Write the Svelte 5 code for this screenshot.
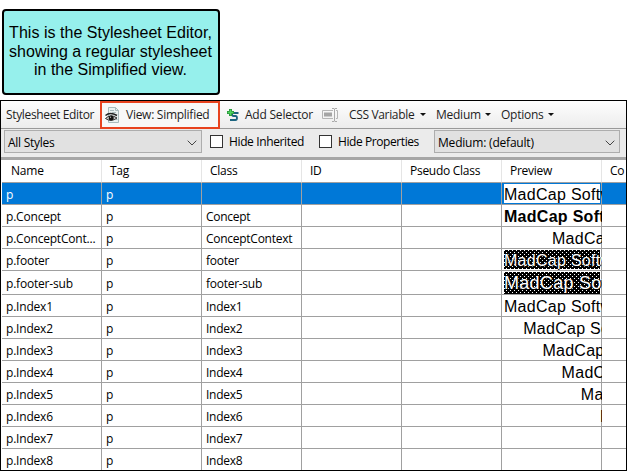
<script>
  const columns = ['Name', 'Tag', 'Class', 'ID', 'Pseudo Class', 'Preview', 'Co'];
  const rows = [
    { name: 'p', cls: '', preview: 'plain', indent: 0, selected: true },
    { name: 'p.Concept', cls: 'Concept', preview: 'bold', indent: 0 },
    { name: 'p.ConceptCont...', cls: 'ConceptContext', preview: 'plain', indent: 48 },
    { name: 'p.footer', cls: 'footer', preview: 'dark', indent: 0 },
    { name: 'p.footer-sub', cls: 'footer-sub', preview: 'dark large', indent: 0, tall: true },
    ...[1, 2, 3, 4, 5, 6, 7, 8].map((n) => ({
      name: `p.Index${n}`, cls: `Index${n}`, preview: 'plain', indent: (n - 1) * 19.2
    }))
  ];
</script>

<main>
  <div class="callout">
    <span class="c1">This is the Stylesheet Editor,</span>
    <span>showing a regular stylesheet</span>
    <span>in the Simplified view.</span>
  </div>

  <section class="editor">
    <div class="toolbar">
      <span class="title">Stylesheet Editor</span>
      <div class="view">
        <svg width="16" height="16" viewBox="0 0 16 16">
          <path d="M3.5.5h7l3 3v12h-10z" fill="#eaf1f2" stroke="#a9bbbd" />
          <path d="M10.500.5v3h3M5 3.500h4M7 5.500h4M10.500 12.500h2" fill="none" stroke="#a9bbbd" />
          <path d="M.5 8.500Q5 4.500 12 8.500" fill="none" stroke="#222" stroke-width="1.500" />
          <path d="M.5 11.500Q5.500 6.500 12 11Q6 15.500.5 11.500Z" fill="#ccc" stroke="#333" />
          <circle cx="6.200" cy="11" r="2.500" fill="#111" />
          <circle cx="5.500" cy="10.200" r=".6" fill="#ccc" />
        </svg>
        <span>View: Simplified</span>
      </div>
      <svg class="add-icon" width="12" height="12" viewBox="0 0 12 12">
        <path d="M11.500 4H6.500Q5 4 5 5.500T6.500 7H8.500Q10 7 10 9T8.500 11H3" fill="none" stroke="#1c6580" stroke-width="1.800" />
        <path d="M3.500 0v7M0 3.500h7" stroke="#27943a" stroke-width="3" />
        <path d="M3.500.7v5.600M.7 3.500h5.600" stroke="#4fd45f" stroke-width="1.400" />
      </svg>
      <span class="add">Add Selector</span>
      <svg width="17" height="14" viewBox="0 0 17 14">
        <path d="M11 2.500H.5v8H11M14 2.500h1.500v8H14" fill="none" stroke="#b5b5b5" />
        <path d="M2 4.500h8v4H2z" fill="#a5a5a5" />
        <path d="M10 .5h2l.5.5.5-.5h2M10 13.500h2l.5-.5.5.5h2M12.500 1v12" fill="none" stroke="#aaa" />
      </svg>
      <span class="css">CSS Variable</span><i></i>
      <span class="medium">Medium</span><i></i>
      <span class="options">Options</span><i></i>
    </div>

    <div class="filters">
      <div class="select styles"><span>All Styles</span>
        <svg width="10" height="6" viewBox="0 0 10 6"><path d="M.7.7 5 5 9.300.7" fill="none" stroke="#444" /></svg>
      </div>
      <b class="box"></b><span class="inh">Hide Inherited</span>
      <b class="box"></b><span class="prop">Hide Properties</span>
      <div class="select media"><span>Medium: (default)</span>
        <svg width="10" height="6" viewBox="0 0 10 6"><path d="M.7.7 5 5 9.300.7" fill="none" stroke="#444" /></svg>
      </div>
    </div>

    <div class="grid">
      <div class="row head">
        {#each columns as column}<div class="cell">{column}</div>{/each}
      </div>
      {#each rows as row}
        <div class="row" class:selected={row.selected} class:tall={row.tall}>
          <div class="cell">{row.name}</div>
          <div class="cell">p</div>
          <div class="cell">{row.cls}</div>
          <div class="cell"></div>
          <div class="cell"></div>
          <div class="cell sample">
            <div class="preview {row.preview}" style="padding-left: {row.indent}px">MadCap Software</div>
          </div>
          <div class="cell"></div>
        </div>
      {/each}
    </div>
  </section>
</main>

<style>
  :global(body) { background: #fff; }
  * { box-sizing: border-box; }
  main { width: 627px; height: 471px; overflow: hidden; padding-top: 9px; font: 12px/16px "Open Sans", "Noto Sans", sans-serif; color: #000; white-space: nowrap; letter-spacing: -0.27px; }
  svg { flex: none; display: block; }
  .callout { width: 218px; height: 86px; margin: 0 0 5px 1.500px; border: 2px solid #000; border-radius: 4px; background: #96f0ec; display: flex; flex-direction: column; align-items: center; padding-top: 13px; font: 16px/18.500px "Liberation Sans", Arial, sans-serif; letter-spacing: 0; }
  .c1 { letter-spacing: .03px; }
  .editor { height: 371px; width: 627px; border: 1px solid #000; display: flex; flex-direction: column; overflow: hidden; }
  .toolbar { flex: none; height: 28px; display: flex; align-items: center; padding-left: 5px; border-bottom: 1px solid #999; background: linear-gradient(#fefefe, #ececec); color: #1e1e1e; }
  .title { width: 94px; letter-spacing: -0.35px; }
  .view { width: 120px; height: 28px; border: 2px solid #e8431f; display: flex; align-items: center; padding-left: 3px; gap: 5px; background: #f8f8f8; }
  .add-icon { margin-left: 7px; }
  .add { width: 77px; margin-left: 6px; letter-spacing: -0.22px; }
  .css { width: 66px; margin-left: 10px; letter-spacing: -0.34px; }
  .medium { width: 44px; margin-left: 10px; letter-spacing: -0.25px; }
  .options { width: 42px; margin-left: 10px; letter-spacing: -0.25px; }
  i { margin-left: 5px; border: 3px solid transparent; border-top: 3px solid #111; border-bottom: 0; }
  .filters { flex: none; height: 31px; display: flex; align-items: center; padding: 0 0 3px 3px; border-bottom: 3px solid #a6a6a6; background: #ebebeb; }
  .select { height: 23px; border: 1px solid #adadad; background: #e1e1e1; display: flex; align-items: center; justify-content: space-between; padding: 2px 4px 0 3px; }
  .styles { width: 198px; }
  .media { width: 186px; letter-spacing: -0.2px; }
  .box { width: 13px; height: 13px; margin-left: 8px; border: 1px solid #333; background: #fff; }
  .inh { width: 82px; margin-left: 6px; letter-spacing: -0.37px; }
  .prop { width: 96px; margin-left: 6px; letter-spacing: -0.42px; }
  .grid { flex: 1; margin-left: 1px; }
  .row { height: 22px; display: flex; width: 700px; }
  .tall { height: 24px; }
  .cell { flex: none; width: 100px; border-right: 1px solid #a0a0a0; border-bottom: 1px solid #a0a0a0; padding: 4px 0 0 4px; overflow: hidden; }
  .cell:first-child { letter-spacing: -0.2px; }
  .tall .cell { padding-top: 5px; }
  .head { height: 23px; }
  .head .cell { border-right-color: #e5e5e5; padding: 3px 0 0 8px; }
  .head .cell:first-child { padding-left: 9px; }
  .selected { background: #0078d7; color: #fff; }
  .row .sample { padding: 1px 0 0 2px; border-right: 0; box-shadow: inset -1px 0 #a0a0a0; }
  .head .sample { box-shadow: none; }
  .preview { width: 96px; height: 19px; color: #000; font: 16px/21px "Liberation Sans", Arial, sans-serif; letter-spacing: .28px; }
  .selected .preview { background: #fff; }
  .bold { font-weight: 700; }
  .dark {
    color: #fff;
    text-shadow: 0 1px #000, 1px 0 #000;
    background:
      radial-gradient(circle at .5px .5px, #fff .6px, transparent .7px) 0 0 / 4px 4px,
      radial-gradient(circle at .5px .5px, #fff .6px, transparent .7px) 2px 2px / 4px 4px,
      #000;
  }
  .large { height: 22px; font-size: 18px; line-height: 23px; }
</style>
